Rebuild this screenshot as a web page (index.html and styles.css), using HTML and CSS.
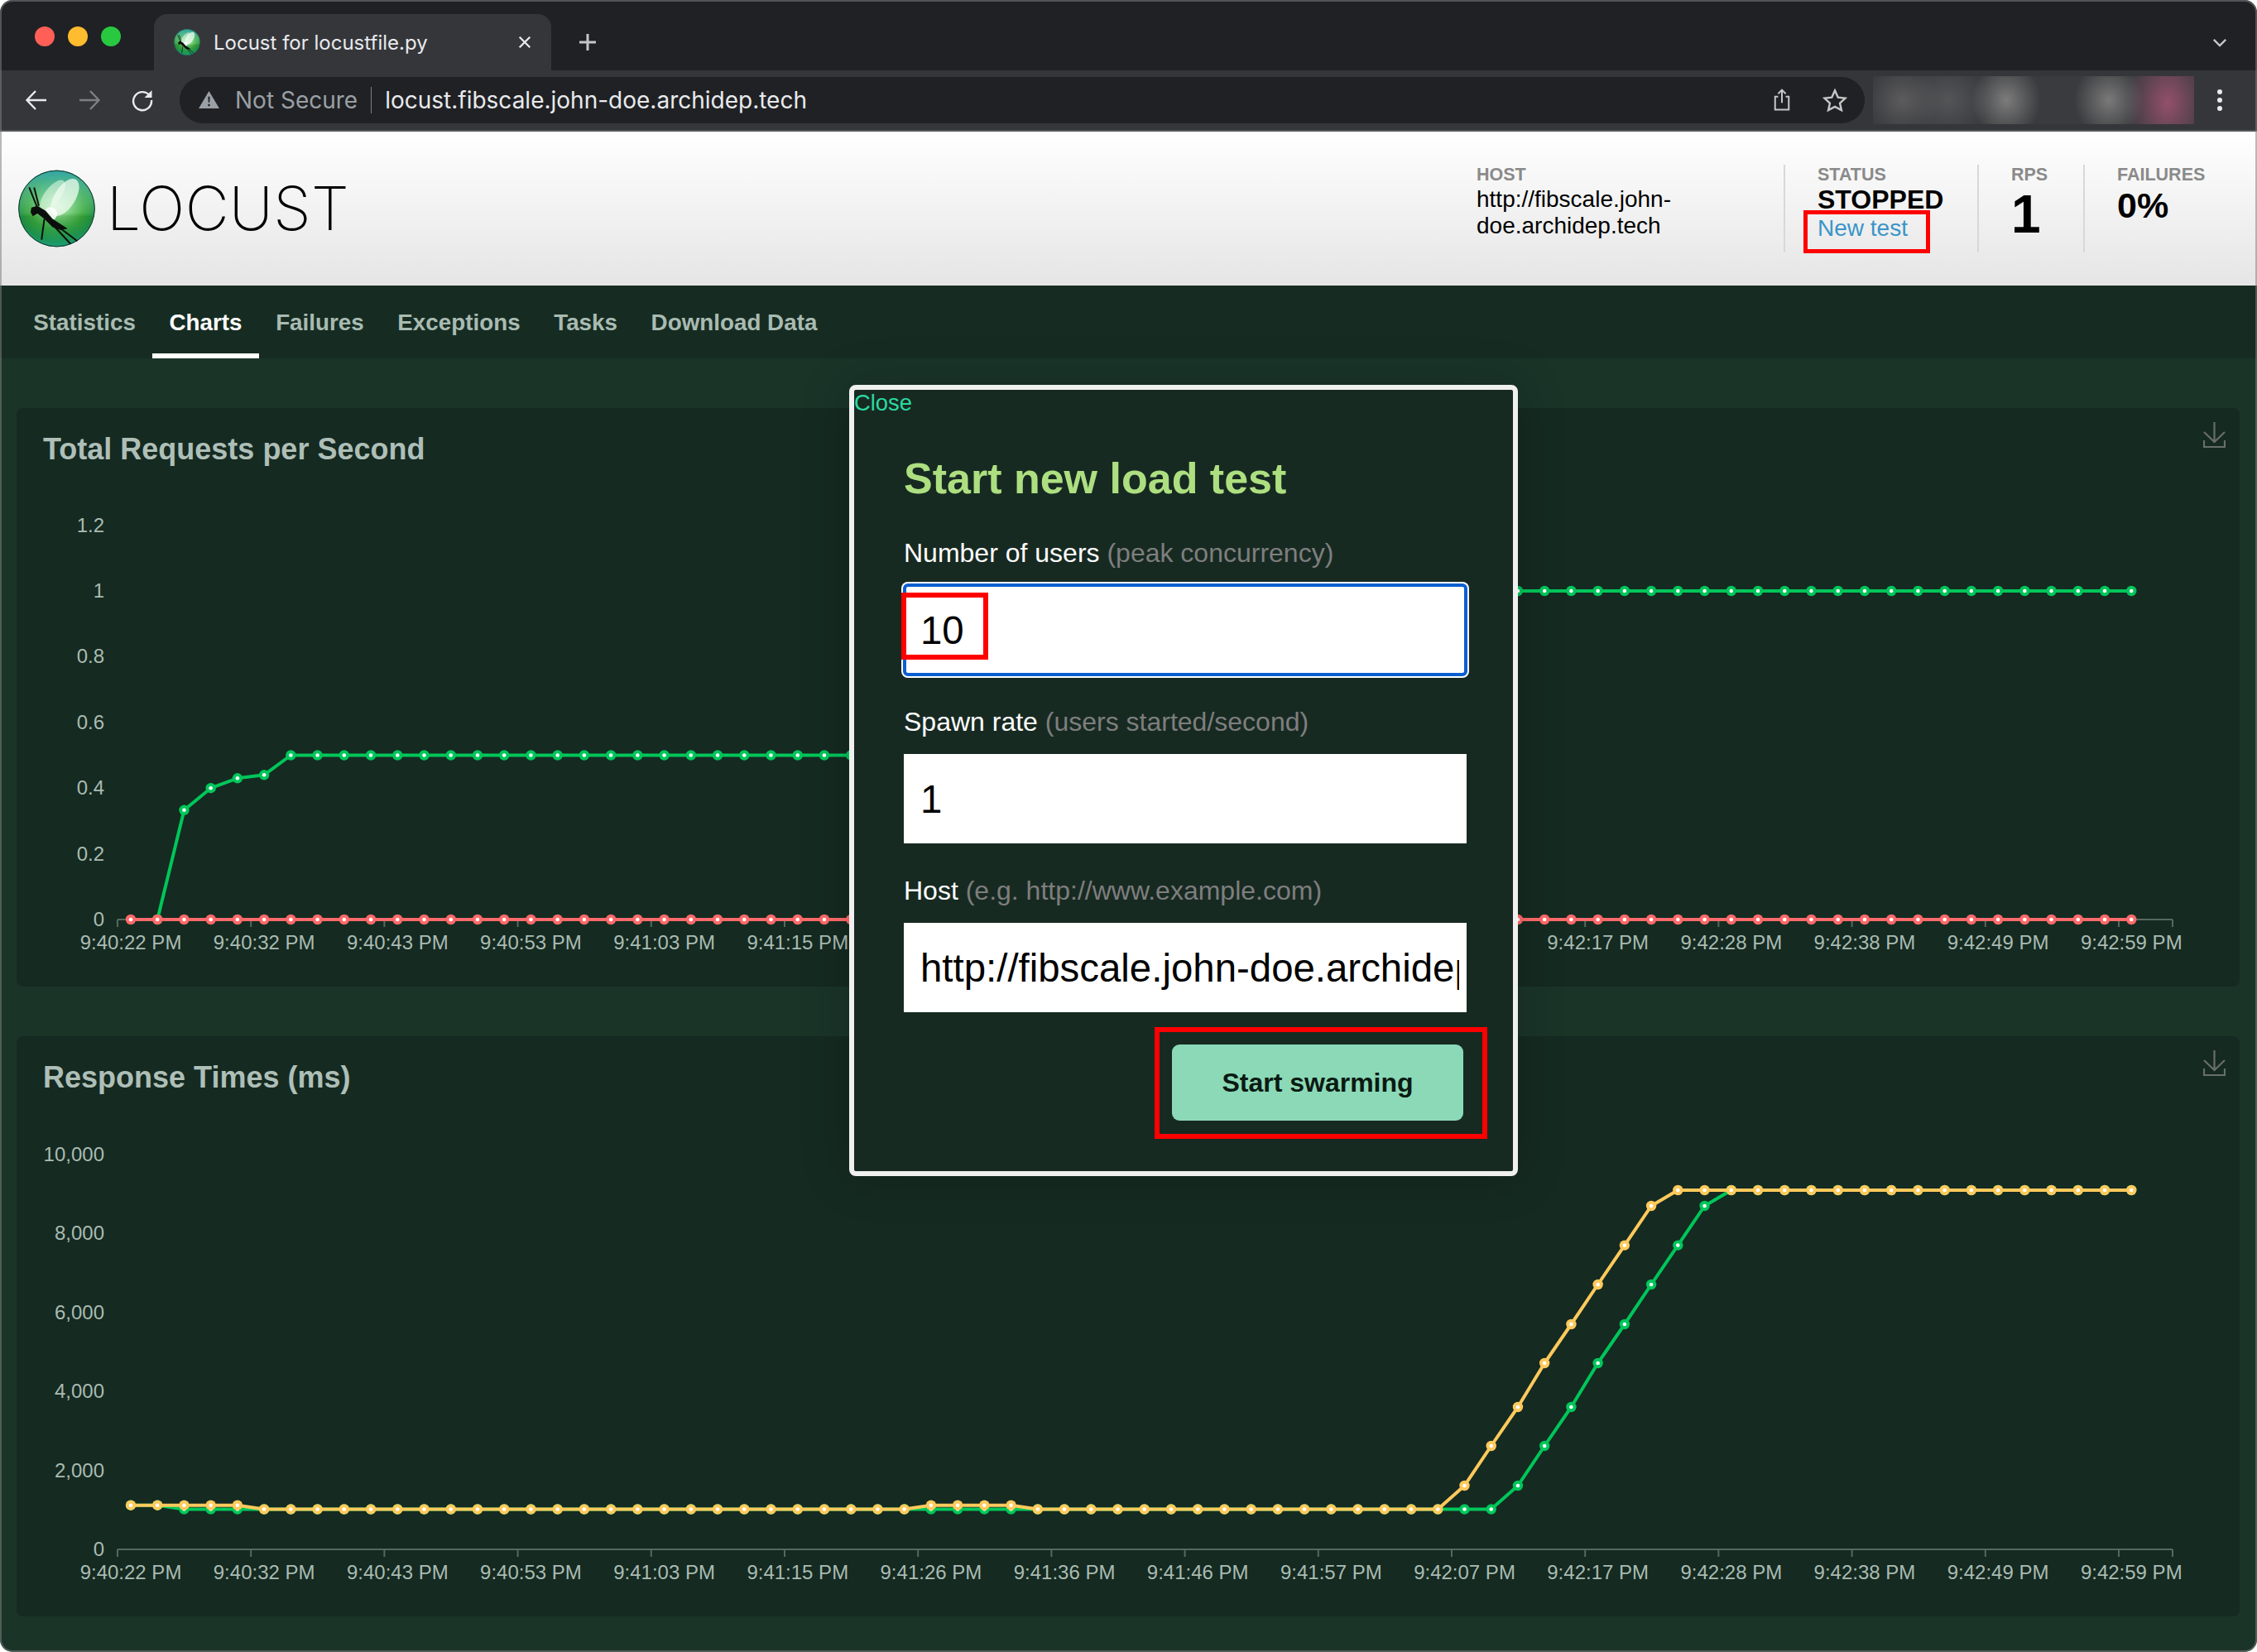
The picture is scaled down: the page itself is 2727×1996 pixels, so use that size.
FILE: index.html
```html
<!DOCTYPE html>
<html lang="en">
<head>
  <meta charset="UTF-8">
  <title>Locust for locustfile.py</title>
  <link rel="stylesheet" href="styles.css">
</head>
<body>
<svg class="defs" width="0" height="0">
  <defs>
    <radialGradient id="ball" cx="50%" cy="45%" r="58%">
      <stop offset="0" stop-color="#d8f5d8"/>
      <stop offset="0.35" stop-color="#79cf7c"/>
      <stop offset="0.62" stop-color="#3fa83f"/>
      <stop offset="0.85" stop-color="#1f8f4a"/>
      <stop offset="1" stop-color="#2aa6a0"/>
    </radialGradient>
    <linearGradient id="ball-top" x1="0" y1="0" x2="0" y2="1">
      <stop offset="0" stop-color="#32a6a6"/>
      <stop offset="0.55" stop-color="#8fdc9a" stop-opacity="0.15"/>
      <stop offset="0.6" stop-color="#1d7f1d" stop-opacity="0.25"/>
      <stop offset="1" stop-color="#19a078" stop-opacity="0.75"/>
    </linearGradient>
    <symbol id="locust-logo" viewBox="0 0 280 282">
      <circle cx="140" cy="141" r="139" fill="url(#ball)"/>
      <circle cx="140" cy="141" r="139" fill="url(#ball-top)"/>
      <circle cx="140" cy="141" r="138" fill="none" stroke="#17312a" stroke-width="3"/>
      <ellipse cx="125" cy="92" rx="28" ry="66" transform="rotate(38 125 92)" fill="#eafbea" fill-opacity="0.55"/>
      <ellipse cx="170" cy="100" rx="38" ry="76" transform="rotate(32 170 100)" fill="#f0fcf0" fill-opacity="0.75"/>
      <circle cx="118" cy="160" r="24" fill="#fff" fill-opacity="0.85"/>
      <path d="M48 137 70 131 100 149 125 179 180 214 155 219 125 209 95 179 70 159 53 169 45 154Z" fill="#0b0f0c"/>
      <path d="M40 64 68 134M58 64 75 131M95 179 85 254M125 199 190 269M135 199 215 259" stroke="#0b0f0c" stroke-width="6" fill="none"/>
    </symbol>
  </defs>
</svg>

<div class="window">
  <div class="tabstrip">
    <div class="traffic">
      <span class="light red"></span>
      <span class="light yellow"></span>
      <span class="light green"></span>
    </div>
    <div class="tab">
      <svg class="favicon"><use href="#locust-logo"/></svg>
      <span class="tab-title">Locust for locustfile.py</span>
      <svg class="tab-close" viewBox="0 0 14 14"><path d="M1.5 1.5 12.5 12.5M12.5 1.5 1.5 12.5"/></svg>
    </div>
    <svg class="new-tab" viewBox="0 0 22 22"><path d="M11 1V21M1 11H21"/></svg>
    <svg class="tab-menu" viewBox="0 0 20 12"><path d="M2 2 10 10 18 2"/></svg>
  </div>

  <div class="toolbar">
    <svg class="nav-icon" viewBox="0 0 28 28"><path d="M26 14H3M13 3 2.500 14 13 25"/></svg>
    <svg class="nav-icon dim" viewBox="0 0 28 28"><path d="M2 14H25M15 3 25.500 14 15 25"/></svg>
    <svg class="nav-icon" viewBox="0 0 28 28"><path d="M23.500 9.500A11 11 0 1 0 25 14"/><path class="solid" d="M25.500 2V11H16.500Z"/></svg>
    <div class="omnibox">
      <svg class="warn" viewBox="0 0 26 22"><path d="M13 0 26 22H0Z"/><path class="mark" d="M11.800 7H14.200L13.800 14.500H12.200ZM11.800 16.500H14.200V19H11.800Z"/></svg>
      <span class="not-secure">Not Secure</span>
      <span class="omni-sep"></span>
      <span class="url">locust.fibscale.john-doe.archidep.tech</span>
      <svg class="omni-share" viewBox="0 0 24 30"><path d="M7 11H3V28H21V11H17M12 19V2M7 7 12 2 17 7"/></svg>
      <svg class="omni-star" viewBox="0 0 32 30"><path d="M16 2.500 20 11.500 29.500 12.500 22.500 19 24.500 28 16 23.500 7.500 28 9.500 19 2.500 12.500 12 11.500Z"/></svg>
    </div>
    <div class="extensions"></div>
    <svg class="kebab" viewBox="0 0 6 26"><circle cx="3" cy="3" r="3"/><circle cx="3" cy="13" r="3"/><circle cx="3" cy="23" r="3"/></svg>
  </div>

  <header class="app-header">
    <div class="brand">
      <svg class="brand-logo"><use href="#locust-logo"/></svg>
      <span class="brand-name">LOCUST</span>
    </div>
    <div class="stats">
      <div class="stat stat-host">
        <div class="stat-label">HOST</div>
        <div class="stat-text">http://fibscale.john-<br>doe.archidep.tech</div>
      </div>
      <div class="stat stat-status">
        <div class="stat-label">STATUS</div>
        <div class="stat-strong">STOPPED</div>
        <a class="new-test" href="#">New test</a>
        <span class="callout callout-newtest"></span>
      </div>
      <div class="stat stat-rps">
        <div class="stat-label">RPS</div>
        <div class="stat-big">1</div>
      </div>
      <div class="stat stat-fail">
        <div class="stat-label">FAILURES</div>
        <div class="stat-mid">0%</div>
      </div>
    </div>
  </header>

  <nav class="tabs">
    <a href="#">Statistics</a>
    <a href="#" class="active">Charts</a>
    <a href="#">Failures</a>
    <a href="#">Exceptions</a>
    <a href="#">Tasks</a>
    <a href="#">Download Data</a>
  </nav>

  <main class="content">
    <section class="panel">
      <h2>Total Requests per Second</h2>
      <svg class="dl" viewBox="0 0 27 31"><path d="M13.500 0V24M1 12 13.500 24 26 12M1 22V30H26V22"/></svg>
      <svg class="chart chart-rps" id="chart-rps" viewBox="20 593 2686 599"></svg>
    </section>
    <section class="panel">
      <h2>Response Times (ms)</h2>
      <svg class="dl" viewBox="0 0 27 31"><path d="M13.500 0V24M1 12 13.500 24 26 12M1 22V30H26V22"/></svg>
      <svg class="chart chart-times" id="chart-times" viewBox="20 1352 2686 601"></svg>
    </section>
  </main>

  <div class="modal">
    <a class="close" href="#">Close</a>
    <form class="swarm-form">
      <h2>Start new load test</h2>
      <label>Number of users <small>(peak concurrency)</small></label>
      <div class="field">
        <input class="focused" type="text" value="10">
        <span class="callout callout-users"></span>
      </div>
      <label>Spawn rate <small>(users started/second)</small></label>
      <div class="field"><input type="text" value="1"></div>
      <label>Host <small>(e.g. http://www.example.com)</small></label>
      <div class="field"><input type="text" value="http://fibscale.john-doe.archidep.tech"></div>
      <div class="actions">
        <button type="button">Start swarming</button>
        <span class="callout callout-start"></span>
      </div>
    </form>
  </div>
</div>

<script src="charts.js"></script>
</body>
</html>
```
FILE: styles.css
```css
* {
  box-sizing: border-box;
}
html, body {
  margin: 0;
  height: 100%;
  background: #fff;
}
body {
  font-family: "Liberation Sans", Arial, sans-serif;
}
.defs {
  position: absolute;
}
a {
  text-decoration: none;
}

.window {
  position: relative;
  width: 2727px;
  height: 1996px;
  display: flex;
  flex-direction: column;
  overflow: hidden;
  border-radius: 15px;
}
/* thin grey edge of the mac window */
.window::after {
  content: "";
  position: absolute;
  inset: 0;
  border: 2px solid rgba(125, 128, 128, .55);
  border-radius: 15px;
  pointer-events: none;
}

/* browser chrome */
.tabstrip {
  height: 85px;
  background: #202124;
  display: flex;
  align-items: flex-end;
  flex: none;
}
.traffic {
  width: 186px;
  height: 66px;
  padding: 32px 0 0 42px;
  display: flex;
  gap: 16px;
  align-self: flex-start;
  align-items: flex-start;
}
.light {
  width: 24px;
  height: 24px;
  border-radius: 50%;
}
.light.red { background: #ff5f57; }
.light.yellow { background: #febc2e; }
.light.green { background: #28c840; }
.tab {
  width: 480px;
  height: 68px;
  background: #35363a;
  border-radius: 16px 16px 0 0;
  display: flex;
  align-items: center;
  padding: 0 24px;
  color: #e8eaed;
}
.favicon {
  width: 32px;
  height: 32px;
  flex: none;
}
.tab-title {
  margin-left: 16px;
  flex: 1;
  font: 24px Inter, "Liberation Sans", sans-serif;
}
.tab-close {
  width: 16px;
  height: 16px;
  fill: none;
  stroke: #e8eaed;
  stroke-width: 2;
}
.new-tab {
  width: 22px;
  height: 22px;
  margin: 0 0 23px 33px;
  fill: none;
  stroke: #c4c7c5;
  stroke-width: 3;
}
.tab-menu {
  width: 18px;
  height: 11px;
  margin: 0 36px 28px auto;
  fill: none;
  stroke: #c4c7c5;
  stroke-width: 2.6;
}
.toolbar {
  height: 74px;
  background: #35363a;
  border-bottom: 2px solid #55575a;
  display: flex;
  align-items: center;
  padding: 0 0 1px 30px;
  flex: none;
}
.nav-icon {
  width: 28px;
  height: 28px;
  margin-right: 36px;
  fill: none;
  stroke: #e8eaed;
  stroke-width: 2.400;
  flex: none;
}
.nav-icon.dim {
  stroke: #7d7f83;
}
.nav-icon .solid {
  fill: #e8eaed;
  stroke: none;
}
.omnibox {
  width: 2036px;
  height: 56px;
  margin-left: -5px;
  background: #202124;
  border-radius: 28px;
  display: flex;
  align-items: center;
  padding: 0 21px 0 23px;
  font: 28px Inter, "Liberation Sans", sans-serif;
  flex: none;
}
.warn {
  width: 25px;
  height: 21px;
  fill: #9aa0a6;
}
.warn .mark {
  fill: #202124;
}
.not-secure {
  margin-left: 19px;
  color: #9aa0a6;
}
.omni-sep {
  width: 1px;
  height: 32px;
  margin: 0 16px 0 16px;
  background: #7d7f83;
}
.url {
  color: #e8eaed;
}
.omni-share {
  width: 22px;
  height: 29px;
  margin-left: auto;
  fill: none;
  stroke: #c4c7c5;
  stroke-width: 2.200;
}
.omni-star {
  width: 30px;
  height: 28px;
  margin-left: 38px;
  fill: none;
  stroke: #c4c7c5;
  stroke-width: 2.600;
}
/* the blurred-out extension icons */
.extensions {
  width: 388px;
  height: 58px;
  margin-left: 10px;
  flex: none;
  background:
    radial-gradient(ellipse 42px 46px at 161px 29px, #7c7c7c, rgba(124, 124, 124, 0)),
    radial-gradient(ellipse 42px 46px at 285px 29px, #797979, rgba(121, 121, 121, 0)),
    radial-gradient(ellipse 44px 44px at 36px 29px, #5c5c5e, rgba(92, 92, 94, 0)),
    radial-gradient(ellipse 50px 46px at 90px 29px, #545557, rgba(84, 85, 87, 0)),
    radial-gradient(ellipse 50px 70px at 356px 32px, #93506a, rgba(147, 80, 106, 0)),
    #3a3b3e;
}
.kebab {
  width: 6px;
  height: 26px;
  margin-left: 28px;
  fill: #e8eaed;
  flex: none;
}

/* locust header */
.app-header {
  height: 186px;
  background: linear-gradient(#fff, #e5e5e5);
  display: flex;
  justify-content: space-between;
  flex: none;
}
.brand {
  display: flex;
  align-items: center;
  padding: 0 0 1px 22px;
}
.brand-logo {
  width: 93px;
  height: 94px;
}
.brand-name {
  margin-left: 14px;
  font: 200 73px Inter, sans-serif;
  letter-spacing: .3px;
  color: #000;
}
.stats {
  display: flex;
  align-items: flex-start;
  padding: 40px 0 0 0;
}
.stat {
  position: relative;
  height: 106px;
  padding: 1px 0 0 0;
  color: #000;
}
.stat-host {
  width: 371px;
}
.stat-status {
  width: 234px;
  border-left: 2px solid #d8d8d8;
  padding-left: 39px;
}
.stat-rps {
  width: 128px;
  border-left: 2px solid #d8d8d8;
  padding-left: 39px;
}
.stat-fail {
  width: 210px;
  border-left: 2px solid #d8d8d8;
  padding-left: 39px;
}
.stat-label {
  font-size: 21.500px;
  line-height: 22px;
  font-weight: bold;
  color: #8a8a8a;
}
.stat-text {
  font-size: 28px;
  line-height: 32px;
  margin-top: 3px;
}
.stat-strong {
  font-size: 32px;
  line-height: 32px;
  font-weight: bold;
  margin-top: 3px;
}
.stat-big {
  font-size: 64px;
  line-height: 64px;
  font-weight: bold;
  margin-top: 5px;
}
.stat-mid {
  font-size: 43px;
  line-height: 46px;
  font-weight: bold;
  margin-top: 3px;
}
.new-test {
  display: block;
  font-size: 28px;
  line-height: 32px;
  margin-top: 3px;
  color: #3a94c8;
}

/* red annotations */
.callout {
  position: absolute;
  border: 6px solid #f00;
  pointer-events: none;
}
.callout-newtest {
  left: 22px;
  top: 55px;
  width: 153px;
  height: 52px;
  border-width: 5px;
}
.callout-users {
  left: -3px;
  top: 11px;
  width: 105px;
  height: 81px;
}
.callout-start {
  right: -29px;
  top: -21px;
  width: 402px;
  height: 135px;
}

/* nav */
.tabs {
  height: 88px;
  background: #162c22;
  display: flex;
  padding-left: 20px;
  flex: none;
}
.tabs a {
  height: 88px;
  padding: 29px 20.300px 0;
  font-size: 27.800px;
  line-height: 32px;
  font-weight: bold;
  color: #a9bbb2;
}
.tabs a.active {
  color: #fff;
  border-bottom: 6px solid #fff;
}

/* panels */
.content {
  flex: 1;
  background: #1a3428;
  padding: 60px 21px 0 20px;
  display: flex;
  flex-direction: column;
  gap: 60px;
}
.panel {
  position: relative;
  background: #152a21;
  border-radius: 8px;
}
.panel h2 {
  margin: 0;
  height: 100px;
  padding: 30px 0 0 32px;
  font-size: 36px;
  line-height: 40px;
  font-weight: bold;
  color: #aebfb7;
}
.chart {
  display: block;
  width: 2686px;
}
.chart-rps {
  height: 599px;
}
.chart-times {
  height: 601px;
}
.chart text {
  font-family: "Liberation Sans", Arial, sans-serif;
  font-size: 24px;
  fill: #a9bbb2;
}
.dl {
  position: absolute;
  right: 17px;
  top: 17px;
  width: 27px;
  height: 31px;
  fill: none;
  stroke: #696e6b;
  stroke-width: 2.200;
}

/* modal */
.modal {
  position: absolute;
  left: 1026px;
  top: 465px;
  width: 808px;
  height: 956px;
  background: #172a22;
  border: 6px solid #f0f0f0;
  border-radius: 8px;
  box-shadow: 0 0 60px rgba(0, 0, 0, .18);
}
.close {
  display: block;
  height: 32px;
  font-size: 27.400px;
  line-height: 32px;
  color: #2bd9a0;
}
.swarm-form {
  padding: 45px 56px 0 60px;
}
.swarm-form h2 {
  margin: 0 0 42px;
  font-size: 52px;
  line-height: 60px;
  font-weight: bold;
  color: #addf80;
}
.swarm-form label {
  display: block;
  height: 36px;
  font-size: 32px;
  line-height: 36px;
  color: #fff;
}
.swarm-form small {
  font-size: inherit;
  color: #7e7e7e;
}
.field {
  position: relative;
  margin: 21px 0 39px;
}
.swarm-form input {
  display: block;
  width: 680px;
  height: 108px;
  padding: 0 9px 0 20px;
  border: 0;
  border-radius: 0;
  outline: 0;
  background: #fff;
  color: #000;
  font-family: "Liberation Sans", Arial, sans-serif;
  font-size: 47.400px;
}
.swarm-form input.focused {
  width: 682px;
  height: 112px;
  margin: -2px -1px;
  border: 4px solid #0a5fd0;
  border-radius: 6px;
  padding-left: 17px;
  box-shadow: 0 0 0 2px #fff;
}
.actions {
  position: relative;
  display: flex;
  justify-content: flex-end;
  margin: 1px 4px 0 0;
}
.actions button {
  width: 352px;
  height: 92px;
  border: 0;
  border-radius: 9px;
  background: #8bd9b7;
  color: #0a1a12;
  font-family: "Liberation Sans", Arial, sans-serif;
  font-size: 32px;
  font-weight: bold;
}
```
FILE: charts.js
```js
// draws both line charts as svg, coordinates are page pixels (see viewBox)
var NS = "http://www.w3.org/2000/svg";
var FIRST_X = 158;
var STEP = 32.23;
var COUNT = 76;
var COLORS = { green: "#00c65a", red: "#ff6a6a", yellow: "#ffca5c" };

var labels = ["9:40:22 PM", "9:40:32 PM", "9:40:43 PM", "9:40:53 PM", "9:41:03 PM", "9:41:15 PM",
  "9:41:26 PM", "9:41:36 PM", "9:41:46 PM", "9:41:57 PM", "9:42:07 PM", "9:42:17 PM",
  "9:42:28 PM", "9:42:38 PM", "9:42:49 PM", "9:42:59 PM"];

function el(parent, name, attrs, text) {
  var node = document.createElementNS(NS, name);
  for (var k in attrs) node.setAttribute(k, attrs[k]);
  if (text) node.textContent = text;
  parent.appendChild(node);
  return node;
}

function drawAxis(svg, axisY, yTicks) {
  yTicks.forEach(function (t) {
    el(svg, "text", { x: 126, y: t.y + 8, "text-anchor": "end" }, t.label);
  });
  el(svg, "line", { x1: 142, x2: 2625, y1: axisY, y2: axisY, stroke: "#56695f", "stroke-width": 2 });
  for (var i = 0; i < 16; i++) {
    var tx = 142 + i * 161.2;
    el(svg, "line", { x1: tx, x2: tx, y1: axisY, y2: axisY + 9, stroke: "#56695f", "stroke-width": 2 });
    el(svg, "text", { x: FIRST_X + i * STEP * 5, y: axisY + 36, "text-anchor": "middle" }, labels[i]);
  }
  el(svg, "line", { x1: 2625, x2: 2625, y1: axisY, y2: axisY + 9, stroke: "#56695f", "stroke-width": 2 });
}

function drawSeries(svg, ys, color, start) {
  var pts = [];
  ys.forEach(function (y, i) {
    if (i >= (start || 0)) pts.push((FIRST_X + i * STEP).toFixed(1) + "," + y);
  });
  el(svg, "polyline", { points: pts.join(" "), fill: "none", stroke: color, "stroke-width": 4, "stroke-linejoin": "round" });
  ys.forEach(function (y, i) {
    if (i < (start || 0)) return;
    var x = FIRST_X + i * STEP;
    el(svg, "circle", { cx: x, cy: y, r: 6.2, fill: color });
    el(svg, "circle", { cx: x, cy: y, r: 2.3, fill: "#fff" });
  });
}

function rpsChart() {
  var svg = document.getElementById("chart-rps");
  var axisY = 1111;
  var unit = 397;
  var ticks = [[1.2, "1.2"], [1, "1"], [0.8, "0.8"], [0.6, "0.6"], [0.4, "0.4"], [0.2, "0.2"], [0, "0"]].map(function (t) {
    return { y: axisY - t[0] * unit, label: t[1] };
  });
  drawAxis(svg, axisY, ticks);
  var vals = [0, 0, 0.333, 0.4, 0.43, 0.44];
  for (var i = 6; i < COUNT; i++) {
    if (i < 30) vals.push(0.5);
    else if (i < 38) vals.push(0.5 + (i - 29) * 0.0625);
    else vals.push(1);
  }
  var green = vals.map(function (v) { return +(axisY - v * unit).toFixed(1); });
  var red = vals.map(function () { return axisY; });
  drawSeries(svg, green, COLORS.green, 1);
  drawSeries(svg, red, COLORS.red);
}

function timesChart() {
  var svg = document.getElementById("chart-times");
  var axisY = 1872;
  var ticks = [[10000, "10,000"], [8000, "8,000"], [6000, "6,000"], [4000, "4,000"], [2000, "2,000"], [0, "0"]].map(function (t) {
    return { y: axisY - t[0] * 0.0477, label: t[1] };
  });
  drawAxis(svg, axisY, ticks);

  var low = 1823.5, bump = 1818.7, top = 1438;
  var climb = [1795, 1747, 1700, 1647, 1600, 1552, 1504.6, 1457];
  var yellow = [], green = [];
  for (var i = 0; i < COUNT; i++) {
    var isBump = i < 5 || (i >= 30 && i <= 33);
    yellow.push(i < 50 ? (isBump ? bump : low) : i < 58 ? climb[i - 50] : top);
    green.push(i < 2 ? bump : i < 52 ? low : i < 60 ? climb[i - 52] : top);
  }
  drawSeries(svg, green, COLORS.green);
  drawSeries(svg, yellow, COLORS.yellow);
}

rpsChart();
timesChart();
```
